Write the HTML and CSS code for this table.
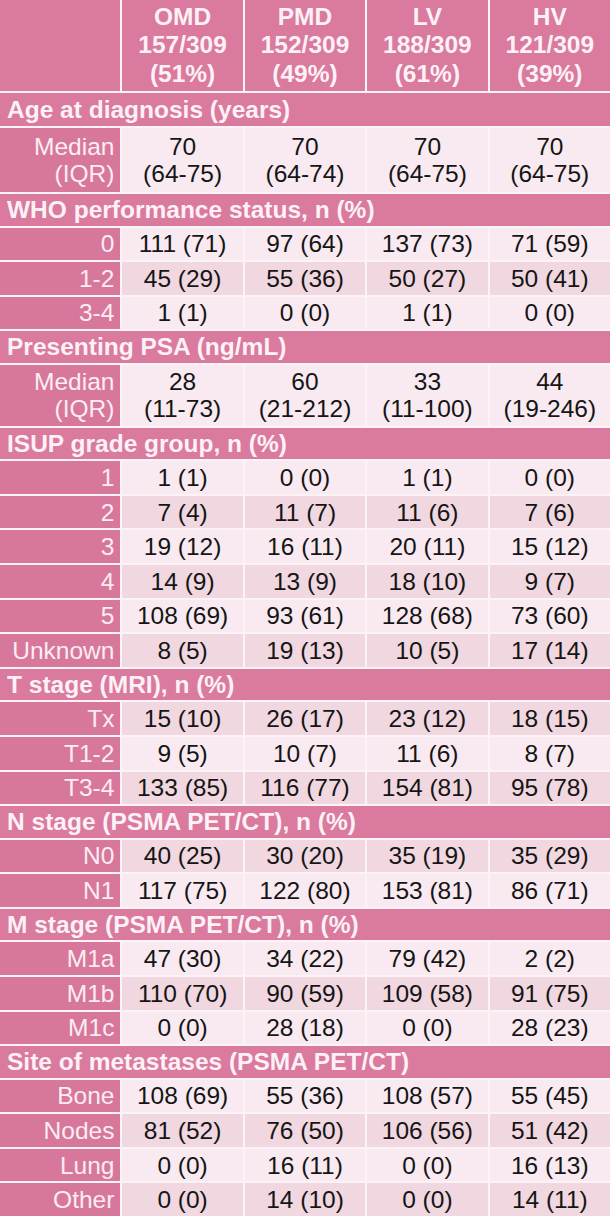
FILE: index.html
```html
<!DOCTYPE html>
<html>
<head>
<meta charset="utf-8">
<link rel="stylesheet" href="styles.css">
</head>
<body>
<div class="tbl">
  <div class="row head">
    <div class="hd"></div>
    <div class="hd">OMD<br>157/309<br>(51%)</div>
    <div class="hd">PMD<br>152/309<br>(49%)</div>
    <div class="hd">LV<br>188/309<br>(61%)</div>
    <div class="hd">HV<br>121/309<br>(39%)</div>
  </div>

  <div class="sec s-age">Age at diagnosis (years)</div>
  <div class="row dbl lt age">
    <div class="lab">Median<br>(IQR)</div>
    <div class="c">70<br>(64-75)</div>
    <div class="c">70<br>(64-74)</div>
    <div class="c">70<br>(64-75)</div>
    <div class="c">70<br>(64-75)</div>
  </div>

  <div class="sec">WHO performance status, n (%)</div>
  <div class="row lt"><div class="lab">0</div><div class="c">111 (71)</div><div class="c">97 (64)</div><div class="c">137 (73)</div><div class="c">71 (59)</div></div>
  <div class="row dk"><div class="lab">1-2</div><div class="c">45 (29)</div><div class="c">55 (36)</div><div class="c">50 (27)</div><div class="c">50 (41)</div></div>
  <div class="row lt"><div class="lab">3-4</div><div class="c">1 (1)</div><div class="c">0 (0)</div><div class="c">1 (1)</div><div class="c">0 (0)</div></div>

  <div class="sec">Presenting PSA (ng/mL)</div>
  <div class="row dbl lt">
    <div class="lab">Median<br>(IQR)</div>
    <div class="c">28<br>(11-73)</div>
    <div class="c">60<br>(21-212)</div>
    <div class="c">33<br>(11-100)</div>
    <div class="c">44<br>(19-246)</div>
  </div>

  <div class="sec">ISUP grade group, n (%)</div>
  <div class="row lt"><div class="lab">1</div><div class="c">1 (1)</div><div class="c">0 (0)</div><div class="c">1 (1)</div><div class="c">0 (0)</div></div>
  <div class="row dk"><div class="lab">2</div><div class="c">7 (4)</div><div class="c">11 (7)</div><div class="c">11 (6)</div><div class="c">7 (6)</div></div>
  <div class="row lt"><div class="lab">3</div><div class="c">19 (12)</div><div class="c">16 (11)</div><div class="c">20 (11)</div><div class="c">15 (12)</div></div>
  <div class="row dk"><div class="lab">4</div><div class="c">14 (9)</div><div class="c">13 (9)</div><div class="c">18 (10)</div><div class="c">9 (7)</div></div>
  <div class="row lt"><div class="lab">5</div><div class="c">108 (69)</div><div class="c">93 (61)</div><div class="c">128 (68)</div><div class="c">73 (60)</div></div>
  <div class="row dk"><div class="lab">Unknown</div><div class="c">8 (5)</div><div class="c">19 (13)</div><div class="c">10 (5)</div><div class="c">17 (14)</div></div>

  <div class="sec">T stage (MRI), n (%)</div>
  <div class="row dk"><div class="lab">Tx</div><div class="c">15 (10)</div><div class="c">26 (17)</div><div class="c">23 (12)</div><div class="c">18 (15)</div></div>
  <div class="row lt"><div class="lab">T1-2</div><div class="c">9 (5)</div><div class="c">10 (7)</div><div class="c">11 (6)</div><div class="c">8 (7)</div></div>
  <div class="row dk"><div class="lab">T3-4</div><div class="c">133 (85)</div><div class="c">116 (77)</div><div class="c">154 (81)</div><div class="c">95 (78)</div></div>

  <div class="sec">N stage (PSMA PET/CT), n (%)</div>
  <div class="row dk"><div class="lab">N0</div><div class="c">40 (25)</div><div class="c">30 (20)</div><div class="c">35 (19)</div><div class="c">35 (29)</div></div>
  <div class="row lt"><div class="lab">N1</div><div class="c">117 (75)</div><div class="c">122 (80)</div><div class="c">153 (81)</div><div class="c">86 (71)</div></div>

  <div class="sec">M stage (PSMA PET/CT), n (%)</div>
  <div class="row lt"><div class="lab">M1a</div><div class="c">47 (30)</div><div class="c">34 (22)</div><div class="c">79 (42)</div><div class="c">2 (2)</div></div>
  <div class="row dk"><div class="lab">M1b</div><div class="c">110 (70)</div><div class="c">90 (59)</div><div class="c">109 (58)</div><div class="c">91 (75)</div></div>
  <div class="row lt"><div class="lab">M1c</div><div class="c">0 (0)</div><div class="c">28 (18)</div><div class="c">0 (0)</div><div class="c">28 (23)</div></div>

  <div class="sec">Site of metastases (PSMA PET/CT)</div>
  <div class="row lt"><div class="lab">Bone</div><div class="c">108 (69)</div><div class="c">55 (36)</div><div class="c">108 (57)</div><div class="c">55 (45)</div></div>
  <div class="row dk"><div class="lab">Nodes</div><div class="c">81 (52)</div><div class="c">76 (50)</div><div class="c">106 (56)</div><div class="c">51 (42)</div></div>
  <div class="row lt"><div class="lab">Lung</div><div class="c">0 (0)</div><div class="c">16 (11)</div><div class="c">0 (0)</div><div class="c">16 (13)</div></div>
  <div class="row dk"><div class="lab">Other</div><div class="c">0 (0)</div><div class="c">14 (10)</div><div class="c">0 (0)</div><div class="c">14 (11)</div></div>
</div>
</body>
</html>
```

FILE: styles.css
```css
html, body {
  margin: 0;
  padding: 0;
  background: #fbf3f6;
}

body {
  width: 610px;
  height: 1216px;
  overflow: hidden;
  font-family: "Liberation Sans", Arial, sans-serif;
  font-size: 24.5px;
}

.tbl {
  display: flex;
  flex-direction: column;
  gap: 2px;
  background: #fbf3f6;
}

.row {
  display: grid;
  grid-template-columns: repeat(5, 1fr);
  column-gap: 2px;
  height: 32.6px;
}

.row.head {
  height: 91px;
}

.row.dbl {
  height: 61px;
}

.row.dbl.age {
  height: 64px;
}

.hd {
  background: #d97a9e;
  color: #fdf1f5;
  font-weight: bold;
  text-align: center;
  line-height: 28.5px;
  display: flex;
  flex-direction: column;
  justify-content: center;
}

.sec {
  background: #d97a9e;
  color: #fdf1f5;
  font-weight: bold;
  height: 31.5px;
  line-height: 31.5px;
  padding-left: 7px;
  white-space: nowrap;
}

.s-age {
  height: 33px;
  line-height: 33px;
}

.lab {
  background: #d7779b;
  color: #fcedf2;
  text-align: right;
  padding-right: 6px;
  display: flex;
  align-items: center;
  justify-content: flex-end;
  line-height: 27px;
}

.dbl .lab {
  flex-direction: column;
  align-items: flex-end;
  justify-content: center;
}

.c {
  color: #151515;
  text-align: center;
  display: flex;
  flex-direction: column;
  justify-content: center;
  line-height: 27px;
}

.lt .c {
  background: #f8eaf0;
}

.dk .c {
  background: #f0d7e0;
}
```
